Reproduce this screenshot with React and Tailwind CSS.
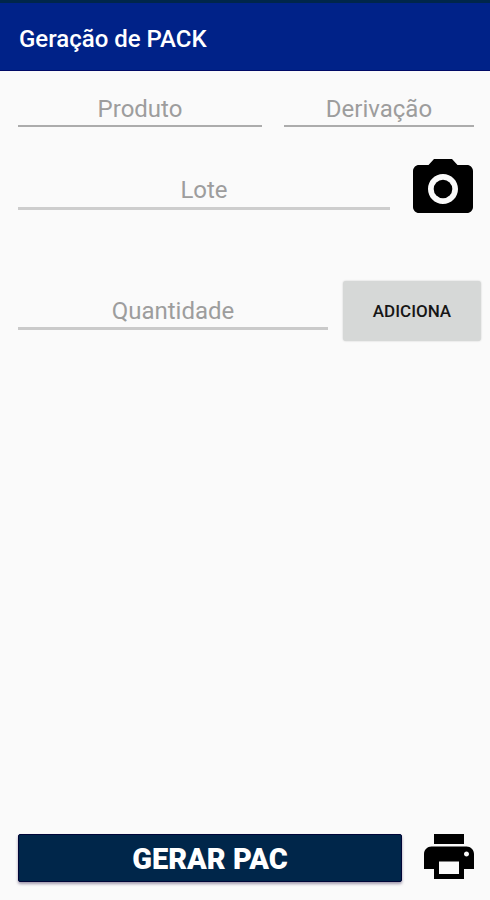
function Field({ label, className, line }) {
  return (
    <div className={`flex h-[34px] flex-col justify-end ${className}`}>
      <input
        aria-label={label}
        placeholder={label}
        className="h-[30px] w-full bg-transparent text-center text-[24px] leading-[30px] text-[#9a9a9a] outline-none placeholder:text-[#9d9d9d]"
      />
      <div className={`w-full shrink-0 ${line}`} />
    </div>
  );
}

function CameraIcon() {
  return (
    <svg viewBox="2 2 20 18" className="h-[54px] w-[60px]" fill="#000">
      <circle cx="12" cy="12" r="3.1" />
      <path d="M9 2L7.17 4H4c-1.1 0-2 .9-2 2v12c0 1.1.9 2 2 2h16c1.1 0 2-.9 2-2V6c0-1.1-.9-2-2-2h-3.17L15 2H9zm3 15c-2.76 0-5-2.24-5-5s2.24-5 5-5 5 2.24 5 5-2.24 5-5 5z" />
    </svg>
  );
}

function PrinterIcon() {
  return (
    <svg viewBox="2 3 20 18" className="h-[45px] w-[50px]" fill="#000">
      <path d="M19 8H5c-1.66 0-3 1.34-3 3v6h4v4h12v-4h4v-6c0-1.66-1.34-3-3-3zm-3 11H8v-5h8v5zm3-7c-.55 0-1-.45-1-1s.45-1 1-1 1 .45 1 1-.45 1-1 1zm-1-9H6v4h12V3z" />
    </svg>
  );
}

export default function App() {
  return (
    <div className="flex h-[900px] w-[490px] flex-col overflow-hidden bg-[#fafafa] font-['Roboto',sans-serif]">
      <div className="h-[3px] shrink-0 bg-[#00264a]" />
      <header className="flex h-[68px] shrink-0 items-center border-b border-[#000a66] bg-[#002288] pt-1 pl-[19px]">
        <h1 className="text-[24px] font-medium text-white">Geração de PACK</h1>
      </header>
      <main className="flex flex-1 flex-col">
        <div className="mt-[22px] flex gap-[22px] pl-[18px]">
          <Field label="Produto" className="w-[244px]" line="mt-px h-0.5 bg-[#acacac]" />
          <Field label="Derivação" className="w-[190px]" line="mt-px h-0.5 bg-[#acacac]" />
        </div>
        <div className="mt-8 flex h-[54px] gap-[23px] pl-[18px]">
          <Field label="Lote" className="mt-[17px] w-[372px]" line="mt-0.5 h-[3px] bg-[#cdcdcd]" />
          <CameraIcon />
        </div>
        <div className="mt-[67px] flex h-[62px] gap-[15px] pl-[18px]">
          <Field label="Quantidade" className="mt-4 w-[310px]" line="mt-px h-[3px] bg-[#cacaca]" />
          <button className="mt-px h-[60px] w-[138px] rounded-[3px] bg-[#d6d8d7] pt-0.5 text-[17px] font-medium text-[#161616] shadow-[0_0_2px_rgba(0,0,0,0.2)]">
            ADICIONA
          </button>
        </div>
        <div className="mt-auto mb-[18px] flex h-12 gap-[22px] pl-[18px]">
          <button className="h-12 w-[384px] rounded-[2px] border border-[#000638] bg-[#00264a] pt-0.5 text-[29px] leading-none font-black text-white shadow-[0_2px_3px_rgba(30,10,60,0.4)]">
            GERAR PAC
          </button>
          <PrinterIcon />
        </div>
      </main>
    </div>
  );
}
